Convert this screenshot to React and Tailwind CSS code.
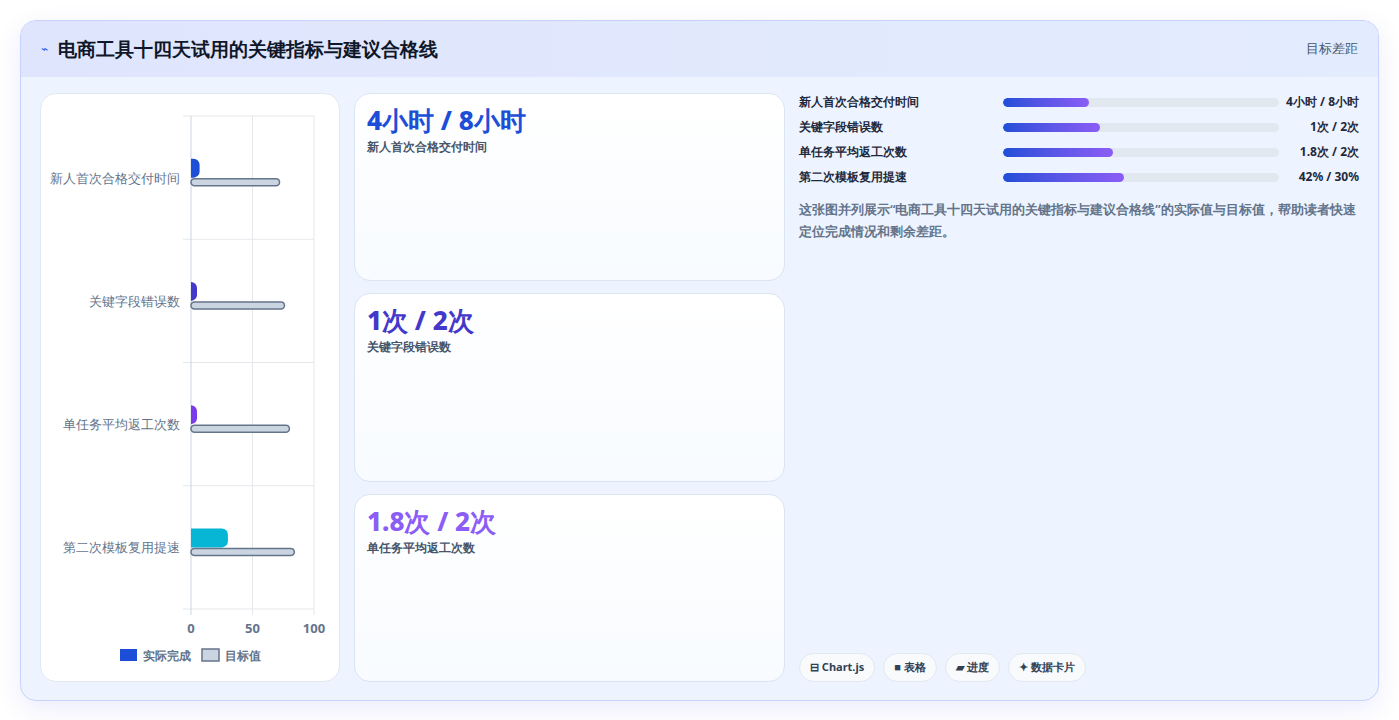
const rows = [
  { label: '新人首次合格交付时间', actual: 7, target: 72, color: '#1d4ed8' },
  { label: '关键字段错误数', actual: 2.5, target: 76, color: '#4338ca' },
  { label: '单任务平均返工次数', actual: 2.5, target: 80, color: '#7c3aed' },
  { label: '第二次模板复用提速', actual: 30, target: 84, color: '#06b6d4' },
]

const progress = [
  { label: '新人首次合格交付时间', value: '4小时 / 8小时', pct: 31 },
  { label: '关键字段错误数', value: '1次 / 2次', pct: 35 },
  { label: '单任务平均返工次数', value: '1.8次 / 2次', pct: 40 },
  { label: '第二次模板复用提速', value: '42% / 30%', pct: 44 },
]

const cards = [
  { big: '4小时 / 8小时', sub: '新人首次合格交付时间', cls: 'text-[#1d4ed8]' },
  { big: '1次 / 2次', sub: '关键字段错误数', cls: 'text-[#4338ca]' },
  { big: '1.8次 / 2次', sub: '单任务平均返工次数', cls: 'text-[#8b5cf6]' },
]

function Chart() {
  const x0 = 150, w = 123, top = 22, rowH = 123.25
  const sx = v => (v / 100) * w
  return (
    <svg width="298" height="587" className="block">
      {[0, 1, 2, 3, 4].map(i => (
        <line key={i} x1={x0 - 8} x2={x0 + w} y1={top + i * rowH} y2={top + i * rowH} stroke="#e5e7eb" />
      ))}
      {[0, 50, 100].map((t, i) => (
        <g key={t}>
          <line x1={x0 + sx(t)} x2={x0 + sx(t)} y1={top} y2={top + 4 * rowH + 6} stroke={i === 0 ? '#cbd5e1' : '#e5e7eb'} />
          <text x={x0 + sx(t)} y={top + 4 * rowH + 24} textAnchor="middle" fontSize="13" fontWeight="700" fill="#64748b">{t}</text>
        </g>
      ))}
      {rows.map((r, i) => {
        const cy = top + i * rowH + rowH / 2
        return (
          <g key={r.label}>
            <text x={x0 - 11} y={cy + 5} textAnchor="end" fontSize="13" fill="#64748b">{r.label}</text>
            <path d={`M${x0} ${cy - 19} h${Math.max(sx(r.actual) - 6, 0)} a6 6 0 0 1 6 6 v7 a6 6 0 0 1 -6 6 h-${Math.max(sx(r.actual) - 6, 0)} z`} fill={r.color} />
            <rect x={x0} y={cy + 1} width={sx(r.target)} height={7} rx={3.5} fill="#cbd5e1" stroke="#64748b" strokeWidth="1.5" />
          </g>
        )
      })}
      <rect x="79" y="555" width="17" height="12" fill="#1d4ed8" />
      <text x="102" y="566" fontSize="12" fontWeight="600" fill="#64748b">实际完成</text>
      <rect x="161" y="555" width="17" height="12" fill="#cbd5e1" stroke="#64748b" strokeWidth="1.5" />
      <text x="184" y="566" fontSize="12" fontWeight="600" fill="#64748b">目标值</text>
    </svg>
  )
}

export default function App() {
  return (
    <div className="w-[1399px] h-[720px] bg-white p-5 font-['Noto_Sans','Noto_Sans_CJK_SC',sans-serif]">
      <div className="h-[681px] rounded-2xl border border-[#c7d2fe] bg-[#eef4ff] overflow-hidden shadow-[0_8px_24px_rgba(99,102,241,0.12)] flex flex-col">
        <div className="h-[56px] shrink-0 flex items-center justify-between px-5 bg-gradient-to-r from-[#dfe5fd] to-[#e3ecfd]">
          <div className="flex items-center gap-2.5">
            <span className="text-[#2563eb] text-xs">⌁</span>
            <span className="text-[19px] font-extrabold text-[#0f172a]">电商工具十四天试用的关键指标与建议合格线</span>
          </div>
          <span className="text-[13px] text-[#475569]">目标差距</span>
        </div>
        <div className="flex-1 flex gap-[14px] px-[19px] pt-[16px] pb-[18px]">
          <div className="w-[300px] bg-white rounded-2xl border border-[#e2e8f0]">
            <Chart />
          </div>
          <div className="w-[431px] flex flex-col gap-3">
            {cards.map(c => (
              <div key={c.sub} className="flex-1 rounded-2xl border border-[#dbe4f3] bg-gradient-to-b from-white to-[#f8fbff] px-3 pt-2.5">
                <div className={`text-[26px] font-extrabold leading-[32px] ${c.cls}`}>{c.big}</div>
                <div className="text-[12px] font-semibold text-[#475569] mt-0.5">{c.sub}</div>
              </div>
            ))}
          </div>
          <div className="flex-1 flex flex-col">
            <div className="flex flex-col gap-[7px]">
              {progress.map(p => (
                <div key={p.label} className="flex items-center h-[18px]">
                  <span className="w-[204px] text-[12px] font-semibold text-[#1e293b]">{p.label}</span>
                  <div className="flex-1 h-[9px] rounded-full bg-[#e2e8f0] overflow-hidden">
                    <div className="h-full rounded-full bg-gradient-to-r from-[#1d4ed8] to-[#8b5cf6]" style={{ width: p.pct + '%' }} />
                  </div>
                  <span className="w-[80px] text-right text-[12px] font-bold text-[#1e293b]">{p.value}</span>
                </div>
              ))}
            </div>
            <p className="mt-3 text-[13px] leading-[22px] font-semibold text-[#64748b]">这张图并列展示“电商工具十四天试用的关键指标与建议合格线”的实际值与目标值，帮助读者快速定位完成情况和剩余差距。</p>
            <div className="mt-auto flex gap-2">
              {['⊟ Chart.js', '■ 表格', '▰ 进度', '✦ 数据卡片'].map(t => (
                <span key={t} className="h-[29px] px-2.5 flex items-center rounded-full bg-[#f8fafc] border border-[#e2e8f0] text-[11px] font-bold text-[#334155]">{t}</span>
              ))}
            </div>
          </div>
        </div>
      </div>
    </div>
  )
}
